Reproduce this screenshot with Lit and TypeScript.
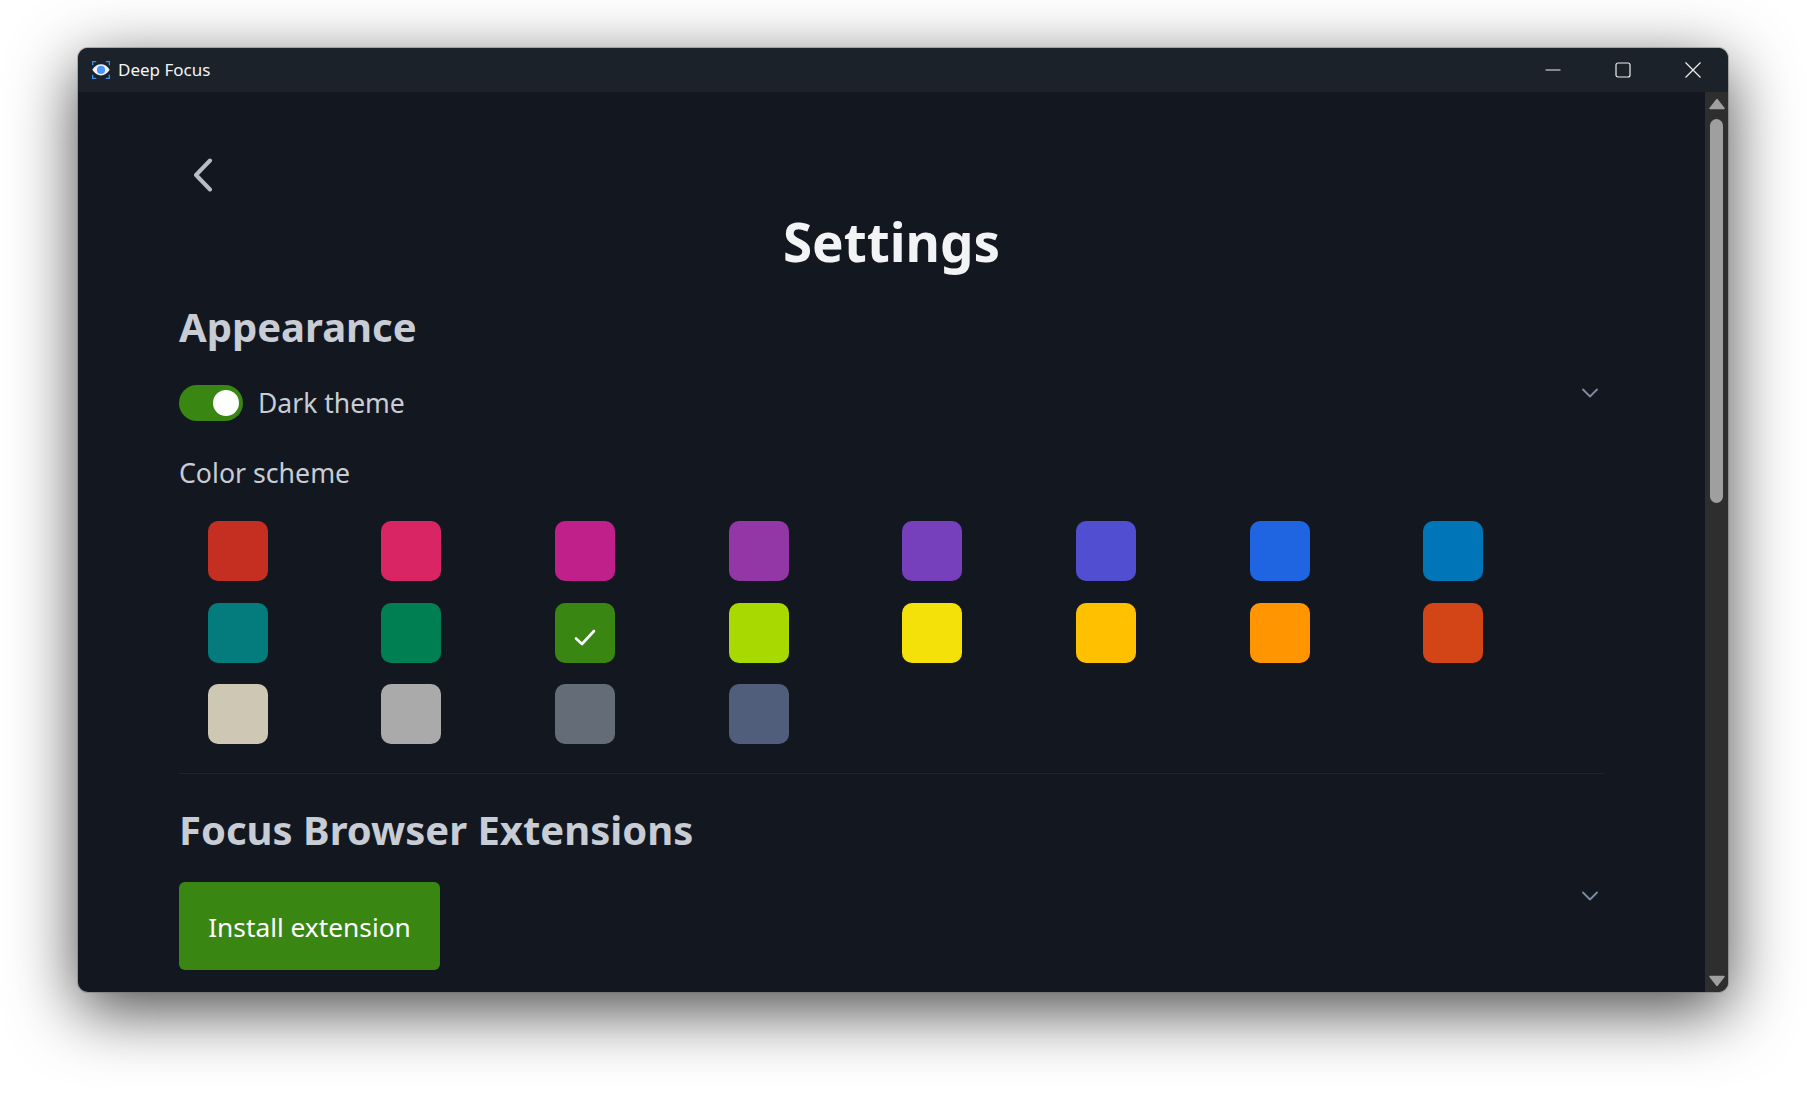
import { LitElement, html, css } from "lit";
import { customElement } from "lit/decorators.js";

const SWATCHES = [
  "#c42f22", "#da2564", "#bf208a", "#9237a5", "#7640bd", "#524ed2", "#1f65e2", "#0075b8",
  "#047b7d", "#007f52", "#3a8613", "#a8d900", "#f4e10a", "#ffc000", "#ff9500", "#d34416",
  "#cdc7b4", "#aaaaaa", "#646c78", "#505e7c",
];

const chevronDown = html`<svg class="chev" width="16" height="10" viewBox="0 0 16 10"><path d="M1 1.500l7 7 7-7" fill="none" stroke="#7f8aa3" stroke-width="1.800" stroke-linecap="round" stroke-linejoin="round"/></svg>`;

@customElement("app-root")
export class AppRoot extends LitElement {
  static styles = css`
    :host {
      display: block;
      height: 1094px;
      background: #fff;
      font-family: "Noto Sans", "Open Sans", sans-serif;
      overflow: hidden;
    }
    .page { height: 100%; box-sizing: border-box; padding: 48px 79px 102px 78px; display: flex; }
    .window {
      flex: 1;
      display: flex;
      flex-direction: column;
      border-radius: 10px;
      overflow: hidden;
      background: #131820;
      box-shadow: 0 0 0 1px rgba(110,110,110,.45), 0 18px 66px rgba(0,0,0,.72);
    }
    .titlebar {
      height: 44px;
      flex: none;
      background: #1b222a;
      display: flex;
      align-items: center;
      padding-left: 14px;
      color: #f2f4f6;
      font-size: 17px;
    }
    .titlebar .logo { margin-right: 8px; }
    .titlebar .name { flex: 1; padding-bottom: 2px; }
    .ctl { width: 70px; height: 44px; display: flex; align-items: center; justify-content: center; padding-bottom: 1px; box-sizing: border-box; }
    .body { flex: 1; display: flex; min-height: 0; }
    .main { flex: 1; padding: 0 101px; overflow: hidden; }
    .back { display: block; margin: 66px 0 0 14px; }
    h1 {
      margin: 13.5px 0 23px; text-align: center; color: #f2f3f5;
      font-size: 53px; line-height: 72px; font-weight: 700;
    }
    h2 { position: relative; margin: 0; color: #c8ccd5; font-size: 40px; line-height: 52px; font-weight: 700; }
    h2 .chev { position: absolute; right: 6px; top: 87px; }
    .row { display: flex; align-items: center; margin-top: 32px; height: 36px; gap: 15px; color: #c8ccd5; font-size: 26.500px; }
    .toggle { width: 64px; height: 36px; border-radius: 18px; background: #3a8613; display: flex; align-items: center; justify-content: flex-end; padding-right: 4.500px; box-sizing: border-box; }
    .knob { width: 26px; height: 26px; border-radius: 50%; background: #fff; }
    .label { color: #c8ccd5; font-size: 26.700px; line-height: 40px; margin-top: 32.500px; }
    .grid { display: grid; grid-template-columns: repeat(8, 173.68px); grid-auto-rows: 60px; row-gap: 21.500px; padding-left: 28.600px; margin-top: 28px; }
    .sw { width: 60px; height: 60px; border-radius: 10px; display: flex; align-items: center; justify-content: center; box-sizing: border-box; }
    .sw.sel { padding-top: 8px; }
    hr { border: 0; height: 1px; background: #1f252d; margin: 29px 0 0; }
    .ext { padding-top: 30px; }
    .btn { display: flex; align-items: center; justify-content: center; width: 261px; height: 88px; margin-top: 26px; padding-top: 2px; box-sizing: border-box; border-radius: 6px; background: #3a8613; color: #fff; font-size: 26.300px; }
    .sb { width: 23px; flex: none; background: #2e2e2e; display: flex; flex-direction: column; align-items: center; position: relative; }
    .thumb { width: 13px; height: 384px; border-radius: 7px; background: #9f9f9f; margin-top: 9px; }
    .arrow { display: block; margin-top: 6px; }
    .arrow.down { position: absolute; bottom: 5px; }
  `;

  render() {
    return html`<div class="page"><div class="window">
      <div class="titlebar">
        <svg class="logo" width="18" height="18" viewBox="0 0 19 19" fill="none">
          <path d="M.7 4.500V.7H4.500M14.500.7h3.800V4.500M18.300 14.500v3.800h-3.800M4.500 18.300H.7v-3.800" stroke="#3b8ef0" stroke-width="1.400"/>
          <path d="M.3 9.300C3 5.300 6 3.500 9.500 3.500s6.500 1.800 9.200 5.800c-2.700 4-5.700 6-9.200 6S3 13.300.3 9.300z" fill="#f0f2f6"/>
          <circle cx="9.500" cy="9.400" r="4.300" fill="#4a95ff"/>
        </svg>
        <span class="name">Deep Focus</span>
        <div class="ctl"><svg width="16" height="16" viewBox="0 0 16 16"><path d="M.5 8h15" stroke="#f0f0f0" stroke-width="1"/></svg></div>
        <div class="ctl"><svg width="16" height="16" viewBox="0 0 16 16"><rect x="1" y="1" width="14" height="14" rx="2" fill="none" stroke="#f0f0f0" stroke-width="1.200"/></svg></div>
        <div class="ctl"><svg width="16" height="16" viewBox="0 0 16 16"><path d="M.5.500l15 15M15.500.500l-15 15" stroke="#f0f0f0" stroke-width="1.200"/></svg></div>
      </div>
      <div class="body">
        <div class="main">
          <svg class="back" width="20" height="34" viewBox="0 0 20 34"><path d="M17 2.500L3 17l14 14.500" fill="none" stroke="#b7bcc6" stroke-width="4" stroke-linecap="round" stroke-linejoin="round"/></svg>
          <h1>Settings</h1>
          <section>
            <h2>Appearance${chevronDown}</h2>
            <div class="row"><div class="toggle"><div class="knob"></div></div><span>Dark theme</span></div>
            <div class="label">Color scheme</div>
            <div class="grid">
              ${SWATCHES.map((c, i) => html`<div class="sw ${i === 10 ? "sel" : ""}" style="background:${c}">${i === 10 ? html`<svg width="24" height="24" viewBox="0 0 24 24"><path d="M3 13.500l6 5.500L21 6" fill="none" stroke="#fff" stroke-width="2.600" stroke-linecap="round" stroke-linejoin="round"/></svg>` : ""}</div>`)}
            </div>
          </section>
          <hr />
          <section class="ext">
            <h2>Focus Browser Extensions${chevronDown}</h2>
            <div class="btn">Install extension</div>
          </section>
        </div>
        <div class="sb">
          <svg class="arrow" width="16" height="12" viewBox="0 0 16 12"><path d="M8 1.500L15 10.500H1z" fill="#a0a0a0" stroke="#a0a0a0" stroke-width="1.500" stroke-linejoin="round"/></svg>
          <div class="thumb"></div>
          <svg class="arrow down" width="16" height="12" viewBox="0 0 16 12"><path d="M8 10.500L15 1.500H1z" fill="#a0a0a0" stroke="#a0a0a0" stroke-width="1.500" stroke-linejoin="round"/></svg>
        </div>
      </div>
    </div></div>`;
  }
}
